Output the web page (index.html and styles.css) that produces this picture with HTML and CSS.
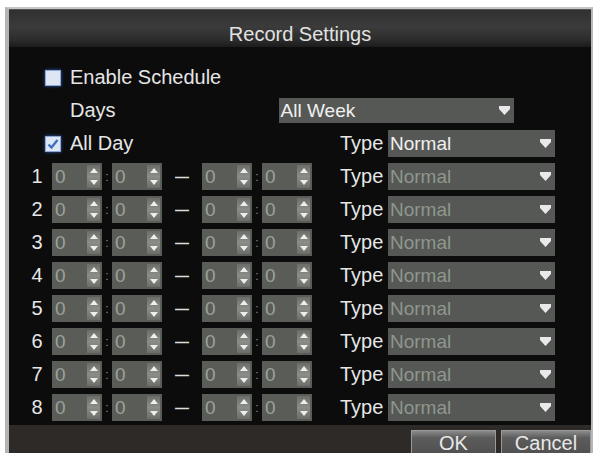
FILE: index.html
```html
<!DOCTYPE html>
<html lang="en">
<head>
    <meta charset="UTF-8">
    <title>Record Settings</title>
    <link rel="stylesheet" href="styles.css">
</head>
<body>
<div class="dialog">
    <div class="titlebar">Record Settings</div>

    <div class="content">
        <div class="row">
            <span class="checkbox"></span>
            <span class="label">Enable Schedule</span>
        </div>

        <div class="row">
            <span class="label days-label">Days</span>
            <div class="select days-select">
                <span class="value">All Week</span>
                <svg class="arrow" viewBox="0 0 11 9"><path d="M0 0H11V3L5.5 9L0 3Z"/></svg>
            </div>
        </div>

        <div class="row">
            <span class="checkbox checked">
                <svg viewBox="0 0 14 14"><path d="M2.5 7.5L5.5 10.5L11.5 3" fill="none" stroke="#3f6fc4" stroke-width="2.4"/></svg>
            </span>
            <span class="label">All Day</span>
            <div class="type-group">
                <span class="type-label">Type</span>
                <div class="select type-select">
                    <span class="value">Normal</span>
                    <svg class="arrow" viewBox="0 0 11 9"><path d="M0 0H11V3L5.5 9L0 3Z"/></svg>
                </div>
            </div>
        </div>

        <div id="periods"></div>
    </div>

    <div class="footer">
        <button class="btn btn-ok">OK</button>
        <button class="btn btn-cancel">Cancel</button>
    </div>
</div>

<script>
    const periods = document.getElementById('periods');

    function spinBox() {
        return '<div class="spinbox"><span class="digit">0</span>' +
            '<span class="spin"><i class="up"></i><i class="down"></i></span></div>';
    }

    for (let i = 1; i <= 8; i++) {
        const row = document.createElement('div');
        row.className = 'row period';
        row.innerHTML =
            `<span class="num">${i}</span>` +
            spinBox() + '<span class="colon">:</span>' + spinBox() +
            '<span class="dash">&mdash;</span>' +
            spinBox() + '<span class="colon">:</span>' + spinBox() +
            '<div class="type-group">' +
                '<span class="type-label">Type</span>' +
                '<div class="select type-select disabled"><span class="value">Normal</span>' +
                '<svg class="arrow" viewBox="0 0 11 9"><path d="M0 0H11V3L5.5 9L0 3Z"/></svg></div>' +
            '</div>';
        periods.appendChild(row);
    }
</script>
</body>
</html>
```

FILE: styles.css
```css
body {
    margin: 0;
    background-color: #fff;
    font-family: "Liberation Sans", Arial, sans-serif;
    overflow: hidden;
}

.dialog {
    margin: 7px 0 0 5px;
    width: 582px;
    height: 460px;
    border-left: 4px solid #b4b4b4;
    border-top: 2px solid #c6c6c6;
    border-right: 2px solid #b8b8b8;
    background-color: #0c0c0c;
    display: flex;
    flex-direction: column;
}

.titlebar {
    height: 38px;
    box-sizing: border-box;
    padding-top: 14px;
    text-align: center;
    font-size: 20px;
    line-height: 20px;
    color: #e2e2e2;
    background: linear-gradient(#303030, #3b3b3b 45%, #2c2c2c 80%, #1c1c1c);
    border-top: 1px solid #555;
}

.content {
    padding: 17px 36px 0 0;
    display: flex;
    flex-direction: column;
    gap: 6px;
}

#periods {
    display: flex;
    flex-direction: column;
    gap: 6px;
}

.row {
    display: flex;
    align-items: center;
    height: 27px;
    padding-left: 36px;
    color: #e6e6e6;
    font-size: 20px;
}

.checkbox {
    width: 14px;
    height: 14px;
    background-color: #dde6f2;
    border: 1px solid #8aa6d6;
    box-shadow: 0 0 3px #2f5fb8;
    margin-right: 9px;
    display: flex;
}

.checkbox svg {
    width: 14px;
    height: 14px;
}

.days-label {
    margin-left: 25px;
}

.select {
    height: 25px;
    display: flex;
    align-items: center;
    justify-content: space-between;
    background-color: #565855;
    box-sizing: border-box;
    padding: 0 4px 0 2px;
}

.select .value {
    font-size: 19px;
    color: #f0f0f0;
}

.select.disabled .value {
    color: #8e978d;
}

.arrow {
    width: 11px;
    height: 9px;
    fill: #e9e9e9;
}

.days-select {
    width: 235px;
    margin-left: 163px;
}

.type-group {
    margin-left: auto;
    display: flex;
    align-items: center;
}

.type-label {
    width: 48px;
}

.type-select {
    width: 167px;
    height: 27px;
}

.period {
    padding-left: 20px;
}

.num {
    width: 16px;
    text-align: center;
    margin-right: 7px;
}

.spinbox {
    width: 50px;
    height: 27px;
    background-color: #5a5c58;
    display: flex;
    align-items: center;
    justify-content: space-between;
}

.digit {
    padding-left: 3px;
    font-size: 19px;
    color: #9aa299;
}

.spin {
    width: 13px;
    height: 23px;
    margin-right: 2px;
    background: linear-gradient(#6a6d68, #8a8d88 50%, #6a6d68);
    display: flex;
    flex-direction: column;
    align-items: center;
    justify-content: space-between;
    padding: 3px 0;
    box-sizing: border-box;
}

.spin i {
    width: 0;
    height: 0;
    border-left: 4px solid transparent;
    border-right: 4px solid transparent;
}

.spin .up {
    border-bottom: 5px solid #eee;
}

.spin .down {
    border-top: 5px solid #eee;
}

.colon {
    width: 10px;
    text-align: center;
    font-size: 12px;
    color: #8a8a8a;
}

.dash {
    width: 40px;
    text-align: center;
    font-size: 14px;
    font-weight: bold;
    color: #ddd;
}

.footer {
    margin-top: 4px;
    flex: 1;
    background-color: #2e2a28;
    display: flex;
    justify-content: flex-end;
    align-items: flex-start;
    gap: 5px;
    padding: 5px 0 0 0;
}

.btn {
    height: 24px;
    font-family: "Liberation Sans", Arial, sans-serif;
    font-size: 20px;
    line-height: 20px;
    color: #e8e8e8;
    background: linear-gradient(#8a8a8a, #5c5c5c 30%, #505050);
    border: 1px solid #9a9a9a;
    border-bottom: none;
    padding: 1px 0 0 0;
}

.btn-ok {
    width: 85px;
}

.btn-cancel {
    width: 90px;
}
```
